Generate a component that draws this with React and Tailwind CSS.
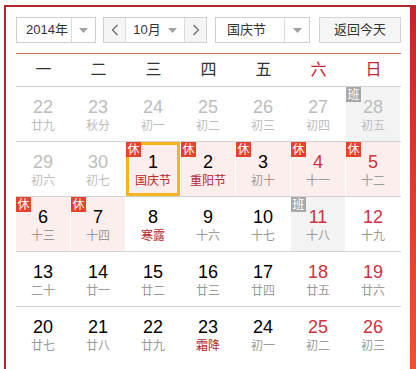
import React from "react";

const FONT = { fontFamily: '"Liberation Sans", Arial, "Noto Sans CJK SC", sans-serif' };

const weeks = [
    [
        { d: 22, l: "廿九", muted: true },
        { d: 23, l: "秋分", muted: true },
        { d: 24, l: "初一", muted: true },
        { d: 25, l: "初二", muted: true },
        { d: 26, l: "初三", muted: true },
        { d: 27, l: "初四", muted: true },
        { d: 28, l: "初五", muted: true, badge: "work" },
    ],
    [
        { d: 29, l: "初六", muted: true },
        { d: 30, l: "初七", muted: true },
        { d: 1, l: "国庆节", fest: true, badge: "rest", selected: true },
        { d: 2, l: "重阳节", fest: true, badge: "rest" },
        { d: 3, l: "初十", badge: "rest" },
        { d: 4, l: "十一", badge: "rest", red: true },
        { d: 5, l: "十二", badge: "rest", red: true },
    ],
    [
        { d: 6, l: "十三", badge: "rest" },
        { d: 7, l: "十四", badge: "rest" },
        { d: 8, l: "寒露", fest: true },
        { d: 9, l: "十六" },
        { d: 10, l: "十七" },
        { d: 11, l: "十八", badge: "work", red: true },
        { d: 12, l: "十九", red: true },
    ],
    [
        { d: 13, l: "二十" },
        { d: 14, l: "廿一" },
        { d: 15, l: "廿二" },
        { d: 16, l: "廿三" },
        { d: 17, l: "廿四" },
        { d: 18, l: "廿五", red: true },
        { d: 19, l: "廿六", red: true },
    ],
    [
        { d: 20, l: "廿七" },
        { d: 21, l: "廿八" },
        { d: 22, l: "廿九" },
        { d: 23, l: "霜降", fest: true },
        { d: 24, l: "初一" },
        { d: 25, l: "初二", red: true },
        { d: 26, l: "初三", red: true },
    ],
];

function Caret() {
    return (
        <svg width="9" height="5" viewBox="0 0 9 5">
            <path d="M0 0 L9 0 L4.5 5 Z" fill="#a0a0a0"/>
        </svg>
    );
}

function Chevron({ dir }) {
    return (
        <svg width="8" height="12" viewBox="0 0 8 12">
            <polyline
                points={dir === "left" ? "6.5,1 1.5,6 6.5,11" : "1.5,1 6.5,6 1.5,11"}
                fill="none"
                stroke="#666"
                strokeWidth="1.2"
            />
        </svg>
    );
}

function Cell({ c }) {
    let bg = "bg-white";
    if (c.badge === "rest") bg = "bg-[#fdeeee]";
    if (c.badge === "work") bg = "bg-[#f3f3f3]";

    let numColor = "text-black";
    if (c.red) numColor = "text-[#d2303c]";
    if (c.muted) numColor = "text-[#bdbdbd]";

    let lunarColor = "text-[#9a9a9a]";
    if (c.fest) lunarColor = "text-[#b8262c]";
    if (c.muted) lunarColor = "text-[#bdbdbd]";

    return (
        <div className={`relative h-[54px] flex flex-col items-center pt-[9px] border-r border-white ${bg}`}>
            {c.selected && (
                <div className="absolute inset-0 border-[3px] border-[#f6b51c]"/>
            )}
            {c.badge && (
                <span
                    className={`absolute left-0 top-0 w-[15px] h-[15px] flex items-center justify-center text-[12px] leading-none text-white ${c.badge === "rest" ? "bg-[#e8412e]" : "bg-[#a8a8a8]"}`}
                >
                    {c.badge === "rest" ? "休" : "班"}
                </span>
            )}
            <span className={`text-[18px] leading-[22px] ${numColor}`}>{c.d}</span>
            <span className={`text-[12px] leading-[16px] ${lunarColor}`}>{c.l}</span>
        </div>
    );
}

export default function App() {
    const days = ["一", "二", "三", "四", "五", "六", "日"];

    return (
        <div className="w-[416px] h-[369px] overflow-hidden bg-white pl-[4px] pt-[5px]" style={FONT}>
            <div className="flex h-full border-l-2 border-t-2 border-[#b5272b]">
                <div className="flex-1 bg-white pl-[10px] pr-[9px] pt-[10px]">
                    {/* header controls */}
                    <div className="flex items-center h-[26px] text-[13px] text-[#333]">
                        <div className="flex h-full w-[80px] border border-[#cfcfcf] bg-white">
                            <div className="flex-1 flex items-center justify-center pl-[6px]">2014年</div>
                            <div className="w-[24px] flex items-center justify-center border-l border-[#dcdcdc]">
                                <Caret/>
                            </div>
                        </div>

                        <div className="flex h-full w-[104px] ml-[7px] border border-[#cfcfcf]">
                            <div className="w-[22px] flex items-center justify-center bg-[#f5f5f5] border-r border-[#dcdcdc]">
                                <Chevron dir="left"/>
                            </div>
                            <div className="flex-1 flex items-center justify-center gap-[7px] bg-white">
                                <span>10月</span>
                                <Caret/>
                            </div>
                            <div className="w-[22px] flex items-center justify-center bg-[#f5f5f5] border-l border-[#dcdcdc]">
                                <Chevron dir="right"/>
                            </div>
                        </div>

                        <div className="flex h-full w-[95px] ml-[8px] border border-[#cfcfcf] bg-white">
                            <div className="flex-1 flex items-center pl-[11px]">国庆节</div>
                            <div className="w-[25px] flex items-center justify-center border-l border-[#dcdcdc]">
                                <Caret/>
                            </div>
                        </div>

                        <button className="h-full w-[82px] ml-[9px] border border-[#d4d4d4] bg-[#f6f6f6] text-[13px] text-[#333] flex items-center justify-center">
                            返回今天
                        </button>
                    </div>

                    <div className="mt-[10px] h-px bg-[#dc6a52]"/>

                    {/* week days */}
                    <div className="grid grid-cols-7 h-[33px] border-b border-[#d2d2d2] text-[16px]">
                        {days.map((d, i) => (
                            <div
                                key={d}
                                className={`flex items-center justify-center ${i >= 5 ? "text-[#c0282e]" : "text-[#333]"}`}
                            >
                                {d}
                            </div>
                        ))}
                    </div>

                    {/* days */}
                    {weeks.map((w, wi) => (
                        <div
                            key={wi}
                            className={`grid grid-cols-7 ${wi < weeks.length - 1 ? "border-b border-[#d2d2d2]" : ""}`}
                        >
                            {w.map((c, ci) => (
                                <Cell key={ci} c={c}/>
                            ))}
                        </div>
                    ))}
                </div>
                <div className="w-[6px] h-full bg-gradient-to-b from-[#c2252b] to-[#ef5427]"/>
            </div>
        </div>
    );
}
